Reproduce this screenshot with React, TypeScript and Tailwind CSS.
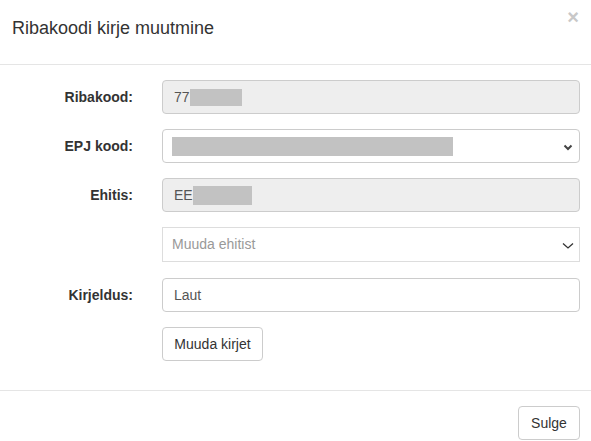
import React from "react";

const labelCls =
  "w-[148px] shrink-0 pr-[15px] pt-[7px] text-right text-[14px] font-bold leading-[20px] text-[#333]";

function Chevron({ thin }: { thin?: boolean }) {
  return thin ? (
    <svg width="12" height="8" viewBox="0 0 12 8" className="absolute right-[5px] top-[14px]">
      <path d="M1 1.5 L6 6 L11 1.5" fill="none" stroke="#333" strokeWidth="1.3" />
    </svg>
  ) : (
    <svg width="10" height="7" viewBox="0 0 10 7" className="absolute right-[6px] top-[14px]">
      <path d="M1.5 1.5 L5 5 L8.5 1.5" fill="none" stroke="#444" strokeWidth="2" />
    </svg>
  );
}

export default function App() {
  return (
    <div
      className="w-[591px] h-[441px] overflow-hidden bg-white text-[#333]"
      style={{ fontFamily: '"Liberation Sans", Arial, sans-serif' }}
    >
      <div className="relative h-[65px] border-b border-[#e5e5e5] pl-[12px] pt-[16px]">
        <h4 className="text-[18px] leading-[24px] text-[#333]">Ribakoodi kirje muutmine</h4>
        <span className="absolute right-[12px] top-[6px] text-[20px] font-bold leading-[22px] text-[#c8c8c8]">
          ×
        </span>
      </div>

      <div className="pt-[15px] h-[326px] border-b border-[#e5e5e5]">
        <div className="flex items-start mb-[15px]">
          <label className={labelCls}>Ribakood:</label>
          <div className="ml-[14px] flex h-[34px] w-[418px] items-center rounded-[4px] border border-[#ccc] bg-[#eee] px-[11px] text-[14px] text-[#555]">
            <span>77</span>
            <span className="inline-block h-[17px] w-[52px] bg-[#c2c2c2]" />
          </div>
        </div>

        <div className="flex items-start mb-[15px]">
          <label className={labelCls}>EPJ kood:</label>
          <div className="relative ml-[14px] flex h-[34px] w-[418px] items-center rounded-[4px] border border-[#ccc] bg-white px-[9px]">
            <span className="inline-block h-[19px] w-[281px] bg-[#c2c2c2]" />
            <Chevron />
          </div>
        </div>

        <div className="flex items-start mb-[15px]">
          <label className={labelCls}>Ehitis:</label>
          <div className="ml-[14px] flex h-[34px] w-[418px] items-center rounded-[4px] border border-[#ccc] bg-[#eee] px-[11px] text-[14px] text-[#555]">
            <span>EE</span>
            <span className="inline-block h-[19px] w-[59px] bg-[#c2c2c2]" />
          </div>
        </div>

        <div className="flex items-start mb-[16px]">
          <div className="w-[148px] shrink-0" />
          <div className="relative ml-[14px] flex h-[35px] w-[418px] items-center border border-[#ddd] bg-white px-[9px] text-[14px] text-[#999]">
            <span>Muuda ehitist</span>
            <Chevron thin />
          </div>
        </div>

        <div className="flex items-start mb-[15px]">
          <label className={labelCls}>Kirjeldus:</label>
          <div className="ml-[14px] flex h-[34px] w-[418px] items-center rounded-[4px] border border-[#ccc] bg-white px-[11px] text-[14px] text-[#555]">
            Laut
          </div>
        </div>

        <div className="flex items-start">
          <div className="w-[148px] shrink-0" />
          <button className="ml-[14px] h-[34px] w-[101px] rounded-[4px] border border-[#ccc] bg-white text-[14px] text-[#333]">
            Muuda kirjet
          </button>
        </div>
      </div>

      <div className="flex justify-end pr-[11px] pt-[15px]">
        <button className="h-[34px] w-[62px] rounded-[4px] border border-[#ccc] bg-white text-[14px] text-[#333]">
          Sulge
        </button>
      </div>
    </div>
  );
}
